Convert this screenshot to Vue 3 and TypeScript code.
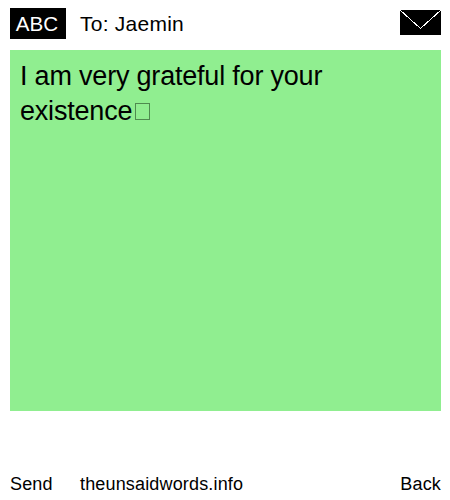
<script setup lang="ts">
const message = 'I am very grateful for your existence'
</script>

<template>
  <div class="page">
    <header class="top">
      <div class="mode">ABC</div>
      <div class="to">To: Jaemin</div>
      <svg class="env" width="41" height="25" viewBox="0 0 41 25" shape-rendering="crispEdges" aria-hidden="true">
        <rect width="41" height="25" fill="#000" />
        <path d="M0 0 L20.5 18.5 L41 0" fill="none" stroke="#fff" stroke-width="1" />
      </svg>
    </header>
    <main class="msg">{{ message }}<span class="tofu"></span></main>
    <footer class="bottom">
      <span class="send">Send</span>
      <span class="site">theunsaidwords.info</span>
      <span class="back">Back</span>
    </footer>
  </div>
</template>

<style>
html, body { margin: 0; background: #fff; }
</style>

<style scoped>
.page {
  width: 450px;
  height: 500px;
  box-sizing: border-box;
  padding: 8px 9px 0 10px;
  display: flex;
  flex-direction: column;
  font-family: "Liberation Sans", Arial, sans-serif;
  color: #000;
  overflow: hidden;
}
.top {
  display: flex;
  align-items: center;
  height: 31px;
}
.mode {
  width: 56px;
  height: 31px;
  box-sizing: border-box;
  padding-right: 2px;
  line-height: 31px;
  background: #000;
  color: #fff;
  font-size: 20.6px;
  text-align: center;
}
.to {
  margin-left: 14px;
  font-size: 21px;
  letter-spacing: 0.25px;
  flex: 1;
}
.env { display: block; margin-top: -3px; }
.msg {
  margin-top: 11px;
  height: 361px;
  box-sizing: border-box;
  padding: 9px 10px 7px;
  background: #90ee90;
  font-size: 27px;
  letter-spacing: -0.2px;
  line-height: 35px;
}
.tofu {
  display: inline-block;
  box-sizing: border-box;
  width: 15px;
  height: 17px;
  margin-left: 3px;
  border: 1px solid #4f8a4f;
  vertical-align: 0;
}
.bottom {
  margin-top: 62px;
  display: flex;
  font-size: 18px;
  letter-spacing: 0.16px;
  line-height: 22px;
}
.send { width: 70px; }
.site { flex: 1; }
</style>
